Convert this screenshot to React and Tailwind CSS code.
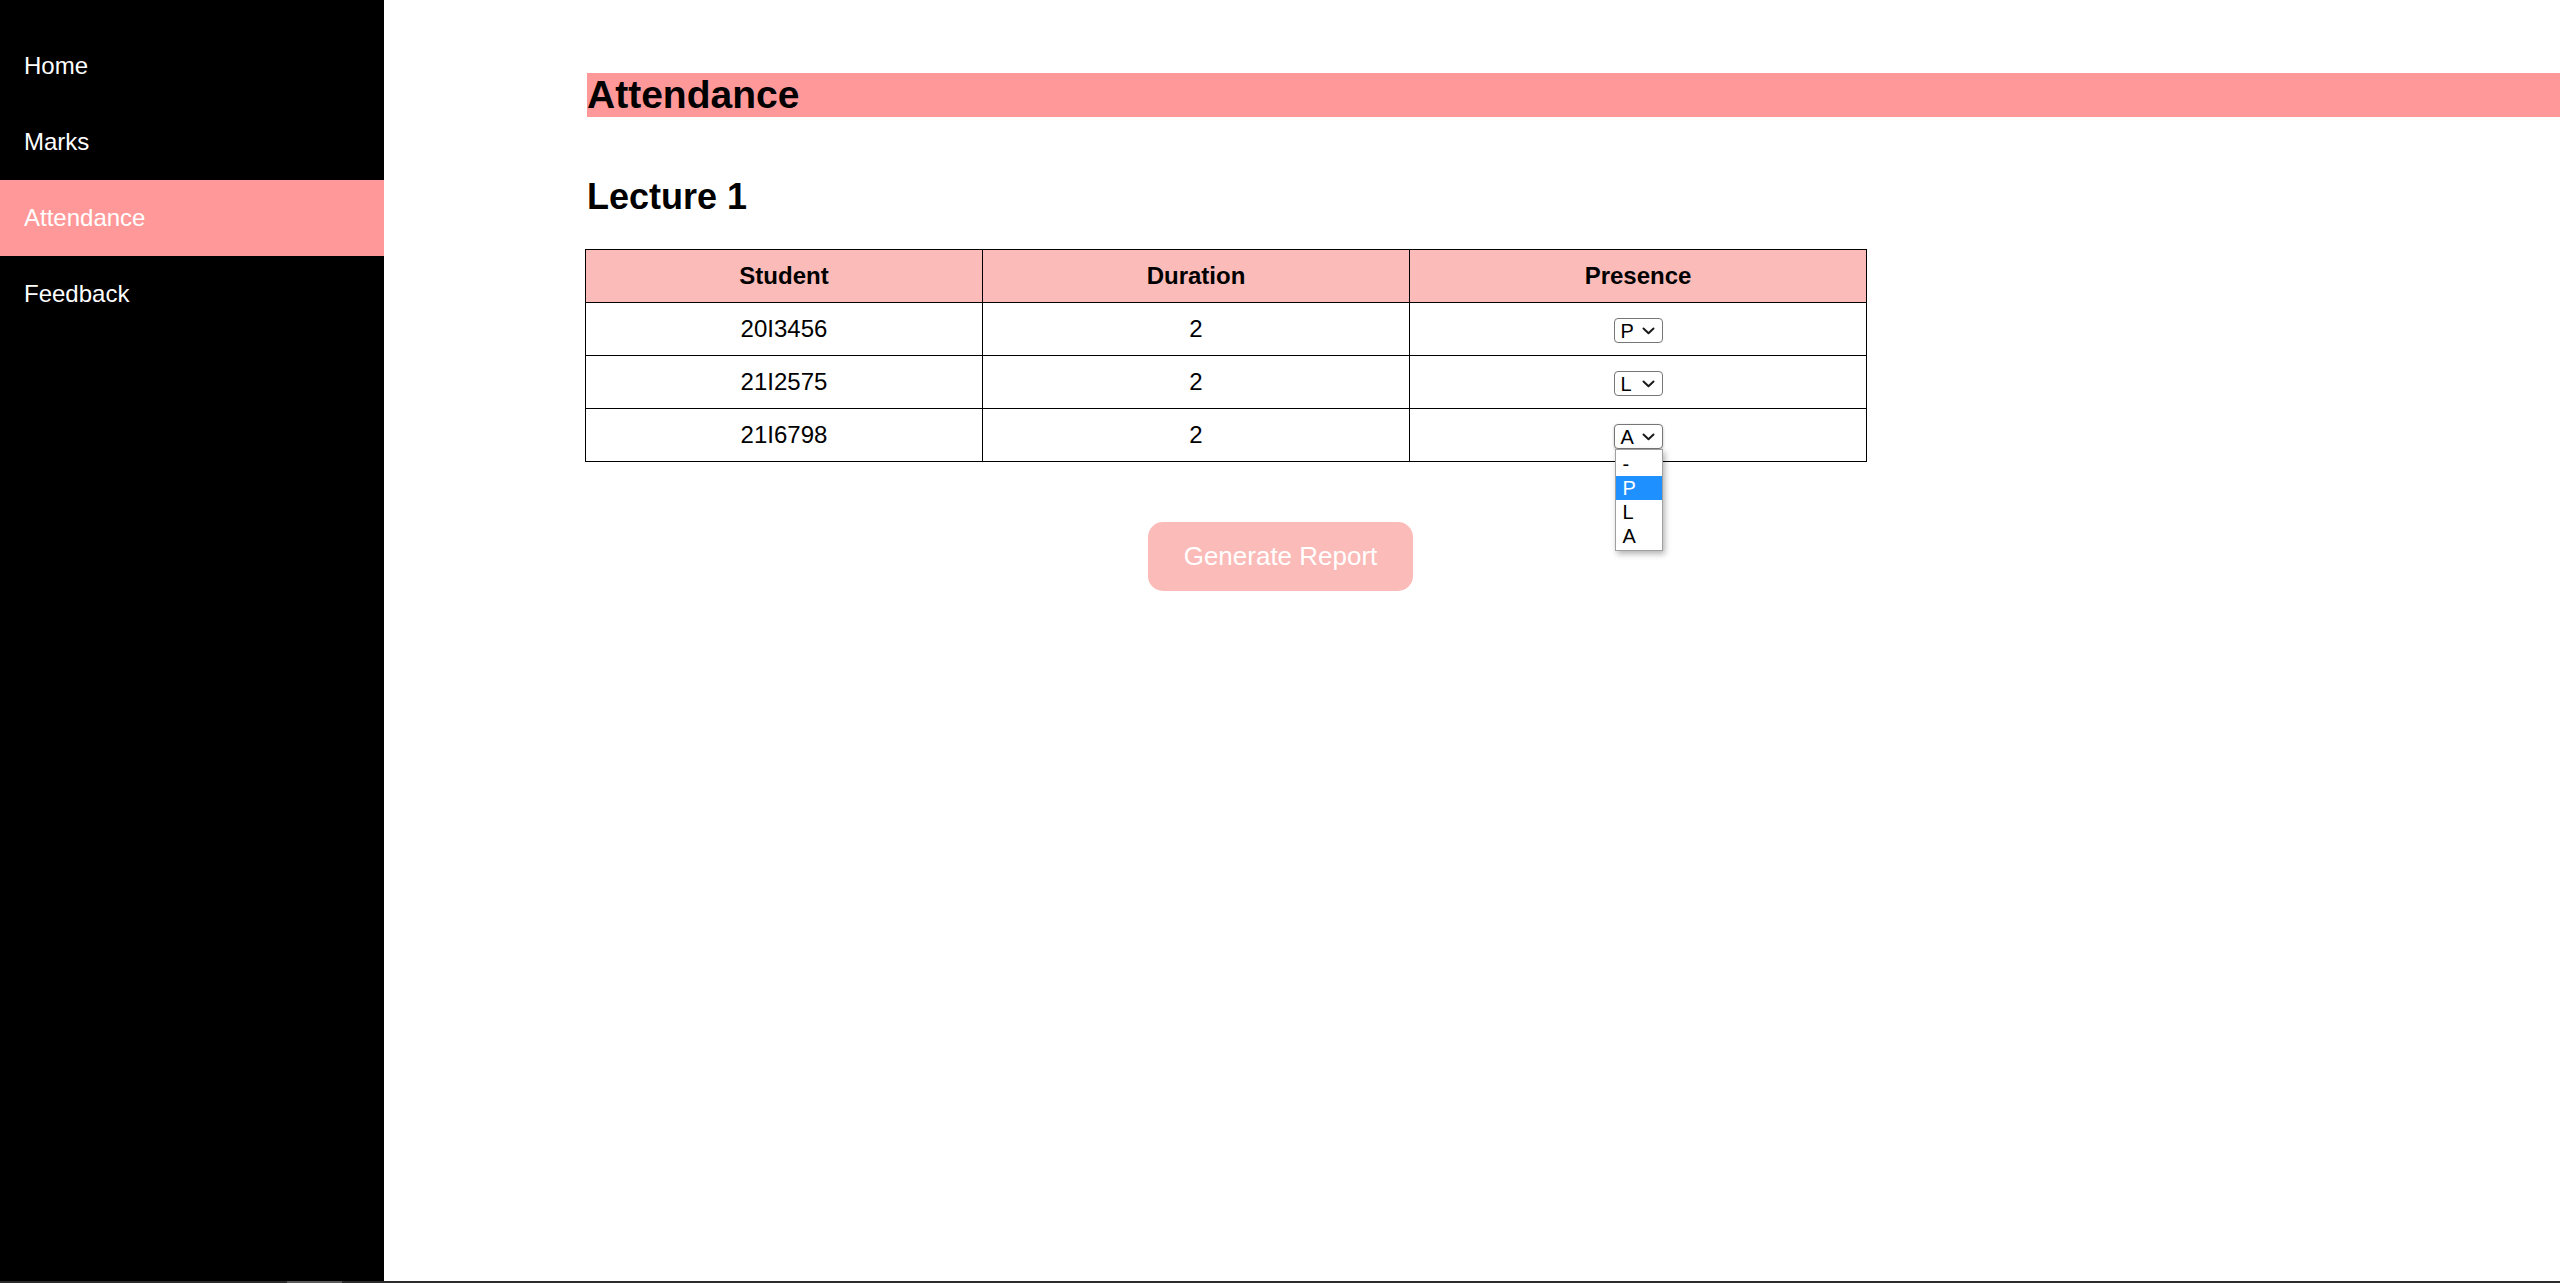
import React from 'react'

const navItems = ['Home', 'Marks', 'Attendance', 'Feedback']

const rows = [
  { student: '20I3456', duration: 2, presence: 'P' },
  { student: '21I2575', duration: 2, presence: 'L' },
  { student: '21I6798', duration: 2, presence: 'A', open: true },
]

const options = ['-', 'P', 'L', 'A']

const Chevron = () => (
  <svg width="13" height="8" viewBox="0 0 13 8" fill="none">
    <path d="M1.5 1.5 L6.5 6.2 L11.5 1.5" stroke="#1a1a1a" strokeWidth="2" strokeLinecap="round" strokeLinejoin="round" />
  </svg>
)

const PresenceSelect = ({ value, open }) => {
  return (
    <div className="relative inline-block align-middle">
      <div
        className={
          'flex h-[25px] w-[49px] items-center justify-between rounded-[4px] border border-[#767676] bg-white pl-[6px] pr-[7px] text-[20px] leading-none text-black' +
          (open ? ' shadow-[0_1px_3px_rgba(0,0,0,0.25)]' : '')
        }
      >
        <span>{value}</span>
        <Chevron />
      </div>
      {open && (
        <ul className="absolute left-[1px] top-[25px] z-10 w-[48px] border border-[#a0a0a0] bg-white py-[2px] text-left shadow-[2px_3px_6px_rgba(0,0,0,0.3)]">
          {options.map((opt) => (
            <li
              key={opt}
              className={
                'h-[24px] pl-[7px] text-[20px] leading-[24px] ' +
                (opt === 'P' ? 'bg-[#1e90ff] text-white' : 'text-black')
              }
            >
              {opt}
            </li>
          ))}
        </ul>
      )}
    </div>
  )
}

const App = () => {
  return (
    <div className="flex h-[1283px] w-full flex-col overflow-hidden bg-white font-['Liberation_Sans',Arial,sans-serif]">
      <div className="flex h-[1281px]">
        {/* Sidebar */}
        <aside className="w-[384px] shrink-0 bg-black pt-[28px] text-white">
          {navItems.map((item) => (
            <div
              key={item}
              className={
                'flex h-[76px] items-center pl-[24px] text-[24px] ' +
                (item === 'Attendance' ? 'bg-[#ff9999]' : '')
              }
            >
              {item}
            </div>
          ))}
        </aside>

        {/* Main */}
        <main className="min-w-0 flex-1 pl-[203px] pt-[73px] text-black">
          <h1 className="bg-[#ff9999] text-[39px] font-bold leading-[44px]">Attendance</h1>
          <h2 className="mt-[60px] text-[36px] font-bold leading-[40px]">Lecture 1</h2>

          <table className="-ml-[2px] mt-[32px] w-[1281px] table-fixed border-collapse border border-black text-[24px]">
            <colgroup>
              <col className="w-[397px]" />
              <col className="w-[427px]" />
              <col className="w-[457px]" />
            </colgroup>
            <thead>
              <tr className="bg-[#fbbbb8]">
                <th className="border border-black py-[12px] font-bold leading-[28px]">Student</th>
                <th className="border border-black py-[12px] font-bold leading-[28px]">Duration</th>
                <th className="border border-black py-[12px] font-bold leading-[28px]">Presence</th>
              </tr>
            </thead>
            <tbody>
              {rows.map((row) => (
                <tr key={row.student}>
                  <td className="border border-black py-[12px] text-center leading-[28px]">{row.student}</td>
                  <td className="border border-black py-[12px] text-center leading-[28px]">{row.duration}</td>
                  <td className="border border-black py-[12px] text-center leading-[28px]">
                    <PresenceSelect value={row.presence} open={row.open} />
                  </td>
                </tr>
              ))}
            </tbody>
          </table>

          <button className="ml-[561px] mt-[60px] block h-[69px] w-[265px] rounded-[15px] bg-[#fbbbb8] text-[26px] text-white">
            Generate Report
          </button>
        </main>
      </div>

      {/* horizontal scrollbar edge */}
      <div className="flex h-[2px] bg-[#2b2b2b]">
        <div className="ml-[287px] w-[55px] bg-[#5a5a5a]" />
      </div>
    </div>
  )
}

export default App
